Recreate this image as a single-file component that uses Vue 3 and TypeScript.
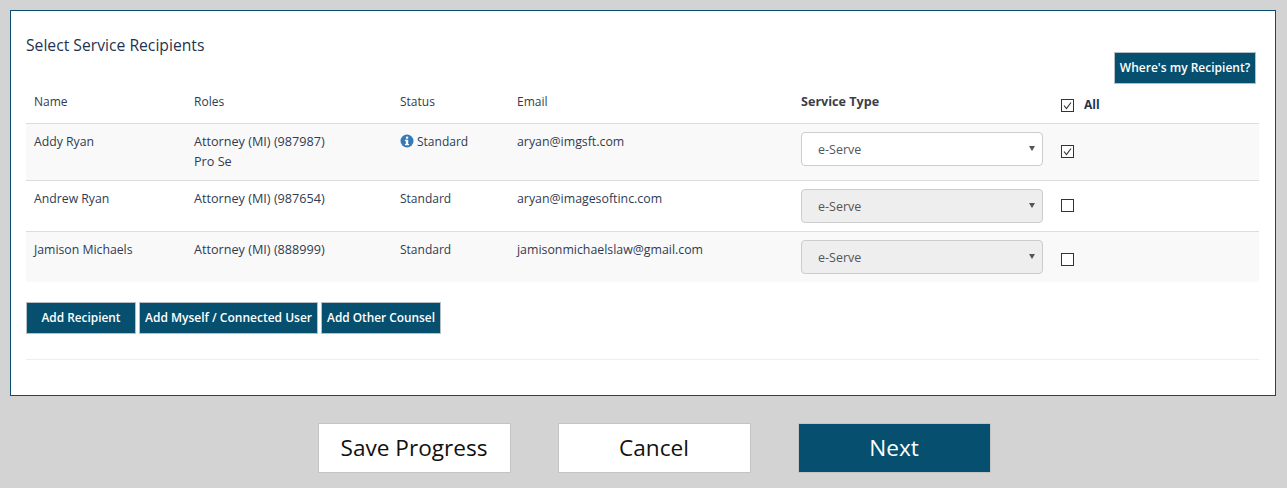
<script setup lang="ts">
interface Recipient {
  name: string
  roles: string[]
  info: boolean
  email: string
  checked: boolean
}
const recipients: Recipient[] = [
  { name: 'Addy Ryan', roles: ['Attorney (MI) (987987)', 'Pro Se'], info: true, email: 'aryan@imgsft.com', checked: true },
  { name: 'Andrew Ryan', roles: ['Attorney (MI) (987654)'], info: false, email: 'aryan@imagesoftinc.com', checked: false },
  { name: 'Jamison Michaels', roles: ['Attorney (MI) (888999)'], info: false, email: 'jamisonmichaelslaw@gmail.com', checked: false },
]
</script>

<template>
  <div class="page">
    <section class="panel">
      <div class="head">
        <h2 class="title">Select Service Recipients</h2>
        <button class="btn where">Where's my Recipient?</button>
      </div>
      <div class="row header">
        <div class="cell">Name</div>
        <div class="cell">Roles</div>
        <div class="cell">Status</div>
        <div class="cell">Email</div>
        <div class="cell strong">Service Type</div>
        <div class="cell all">
          <span class="check on">
            <svg viewBox="0 0 13 13" width="13" height="13"><path d="M3 6.5 5.5 9.5 10 3.5" fill="none" stroke="#333" stroke-width="1.1" /></svg>
          </span>
          <b>All</b>
        </div>
      </div>
      <div
        v-for="(r, i) in recipients"
        :key="r.name"
        class="row body"
        :class="['r' + i]"
      >
        <div class="cell name">{{ r.name }}</div>
        <div class="cell roles">
          <div v-for="role in r.roles" :key="role">{{ role }}</div>
        </div>
        <div class="cell status">
          <svg v-if="r.info" class="info" viewBox="0 0 14 14" width="14" height="14">
            <circle cx="7" cy="7" r="6.5" fill="#337ab7" />
            <rect x="5.9" y="2.6" width="2.3" height="2.1" fill="#fff" />
            <path d="M4.9 5.8H8.2V9.9H9.1V11.2H4.9V9.9H5.8V7.1H4.9Z" fill="#fff" />
          </svg>
          <span>Standard</span>
        </div>
        <div class="cell email">{{ r.email }}</div>
        <div class="cell sel-cell">
          <div class="select" :class="{ disabled: !r.checked }">
            <span>e-Serve</span>
            <i class="caret"></i>
          </div>
        </div>
        <div class="cell chk-cell">
          <span class="check" :class="{ on: r.checked }">
            <svg v-if="r.checked" viewBox="0 0 13 13" width="13" height="13"><path d="M3 6.5 5.5 9.5 10 3.5" fill="none" stroke="#333" stroke-width="1.1" /></svg>
          </span>
        </div>
      </div>
      <div class="actions">
        <button class="btn add a1">Add Recipient</button>
        <button class="btn add a2">Add Myself / Connected User</button>
        <button class="btn add a3">Add Other Counsel</button>
      </div>
      <hr class="rule" />
    </section>
    <footer class="footer">
      <button class="big">Save Progress</button>
      <button class="big">Cancel</button>
      <button class="big primary">Next</button>
    </footer>
  </div>
</template>

<style>
html, body { margin: 0; background: #d3d3d3; }
</style>

<style scoped>
.page {
  width: 1287px;
  height: 488px;
  box-sizing: border-box;
  padding: 10px 11px 0 10px;
  background: #d3d3d3;
  font-family: "Open Sans", "Noto Sans", sans-serif;
  font-size: 12px;
  color: #2f3b52;
  overflow: hidden;
}
.panel {
  box-sizing: border-box;
  height: 386px;
  border: 1px solid #064f6e;
  background: #fff;
  padding: 0 16px 0 15px;
}
.head {
  display: flex;
  justify-content: space-between;
  align-items: flex-start;
  height: 73px;
}
.title {
  margin: 23px 0 0;
  font-size: 15.7px;
  line-height: 22px;
  font-weight: 400;
  color: #1f3350;
}
.btn {
  box-sizing: border-box;
  background: #064f6e;
  color: #fff;
  border: 1px solid #b5c0c6;
  font-family: inherit;
  font-size: 12px;
  font-weight: 600;
  padding: 0 0 2px;
  margin: 0;
}
.where {
  width: 142px;
  height: 32px;
  margin: 41px 3px 0 0;
}
.row {
  display: grid;
  grid-template-columns: 160px 206px 117px 284px 260px 1fr;
}
.cell {
  padding: 0 8px;
  line-height: 20px;
}
.header {
  height: 40px;
  border-bottom: 1px solid #ddd;
  box-sizing: border-box;
}
.header .cell { padding-top: 8px; }
.header .strong { font-weight: 700; color: #3a3f47; font-size: 12.6px; }
.header .all {
  display: flex;
  align-items: center;
  padding-top: 11px;
  align-self: start;
}
.all b { margin-left: 10px; color: #1f3350; font-weight: 700; }
.body { box-sizing: border-box; }
.body .cell { padding-top: 8px; }
.name { font-size: 12.25px; }
.body .roles { font-size: 12.65px; padding-top: 7px; }
.email { font-size: 12.35px; }
.r0 { height: 57px; background: #f9f9f9; border-bottom: 1px solid #ddd; }
.r1 { height: 51px; background: #fff; border-bottom: 1px solid #ddd; }
.r2 { height: 50px; background: #f9f9f9; }
.status { display: flex; align-items: flex-start; }
.info { margin: 2px 3px 0 0; flex: none; }
.select {
  box-sizing: border-box;
  width: 242px;
  height: 34px;
  border: 1px solid #ccc;
  border-radius: 4px;
  background: #fff;
  padding: 0 16px;
  display: flex;
  align-items: center;
  justify-content: space-between;
  color: #555;
  font-size: 12.5px;
  position: relative;
}
.select span { position: relative; top: 1px; }
.select.disabled { background: #eee; }
.caret {
  position: absolute;
  right: 7px;
  top: 13px;
  width: 0;
  height: 0;
  border-left: 3px solid transparent;
  border-right: 3px solid transparent;
  border-top: 5px solid #555;
}
.check {
  box-sizing: border-box;
  display: inline-block;
  width: 13px;
  height: 13px;
  border: 1px solid #333;
  flex: none;
  background: #fff;
  position: relative;
}
.check svg { position: absolute; left: -1px; top: -1px; }
.body .chk-cell { padding-top: 21px; line-height: 0; }
.r1 .chk-cell { padding-top: 18px; }
.r2 .chk-cell { padding-top: 21px; }
.actions {
  display: flex;
  gap: 3px;
  padding-top: 20px;
}
.add { height: 32px; }
.a1 { width: 110px; font-size: 11.85px; }
.a2 { width: 179px; }
.a3 { width: 120px; font-size: 11.85px; }
.rule {
  border: 0;
  border-top: 1px solid #eee;
  margin: 25px 0 0;
}
.footer {
  display: flex;
  justify-content: center;
  gap: 47px;
  padding: 27px 0 0 22px;
}
.big {
  box-sizing: border-box;
  width: 193px;
  height: 50px;
  background: #fff;
  border: 1px solid #c4c4c4;
  color: #111;
  font-family: inherit;
  font-size: 22.6px;
  line-height: 46px;
  padding: 0;
}
.primary { background: #064f6e; color: #fff; border-color: #c4c4c4; }
</style>
